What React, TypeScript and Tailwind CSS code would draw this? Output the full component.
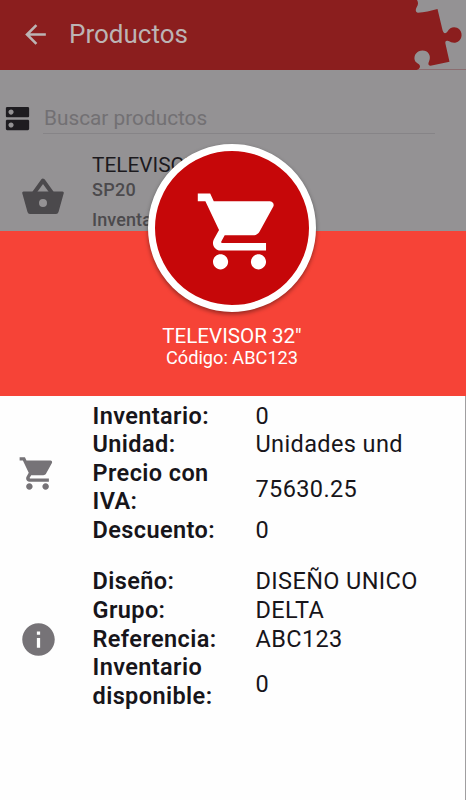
import React from "react";
import { MdArrowBack, MdDns, MdInfo, MdShoppingCart } from "react-icons/md";

function Row({ name, value, h, drop = "" }: { name: string; value: string; h: string; drop?: string }) {
  return (
    <div className={`flex items-center ${h}`}>
      <div className="w-[163px] pr-[30px] font-semibold tracking-[0.4px]">{name}</div>
      <div className={`whitespace-nowrap tracking-[0.38px] ${drop}`}>{value}</div>
    </div>
  );
}

function Puzzle() {
  return (
    <svg className="h-[70px] w-[60px] shrink-0" viewBox="0 0 60 70">
      <path
        d="M0 0H11C12.500 2 12.300 5 10.800 7C9.200 9.500 9.500 12.600 12 12.700C18 12.200 25 11 31.500 9L36.500 30C37.300 33.500 39.500 34.200 41.500 31.500C44 26.500 50 26 53.500 29.500C57.500 34 55.500 41 50 42.500C47 43.200 44.500 42 42.500 41C40 40 39 41.200 39.400 43.500L43.500 61.800L24.500 65.700C22 65.500 22 63.500 23.200 61C25.500 55.500 22 50.500 16.500 50.500C11 50.500 7.500 55 8.700 60C9.600 63.500 14.200 63.500 14 66.500C13.800 68.500 12.500 69.300 10.500 70H0Z"
        fill="#8b1e1e"
      />
    </svg>
  );
}

export default function App() {
  return (
    <div className="relative h-[800px] w-[466px] overflow-hidden bg-[#949294] font-['Roboto',sans-serif]">
      <header className="flex h-[70px] border-b border-[#8b6d70]">
        <div className="flex h-[70px] w-[406px] shrink-0 items-center bg-[#8b1e1e] pl-[20px] text-[#bcb4b4]">
          <MdArrowBack size={31} className="-mt-px" />
          <h1 className="-mt-[2px] ml-[18px] text-[26px] leading-[30px]">Productos</h1>
        </div>
        <Puzzle />
      </header>
      <div className="flex h-[64px] pl-[2px]">
        <MdDns size={31} className="mt-[33px] text-[#1e1c20]" />
        <div className="ml-[10px] flex w-[392px] items-center border-b border-[#868487] pl-[1px] pt-[32px] text-[20.8px] leading-6 text-[#727073]">
          Buscar productos
        </div>
      </div>
      <div className="flex pt-[18px] pl-[22px]">
        <svg className="mt-[26px] h-[37px] w-[42px] text-[#4b494c]" viewBox="0 0 42 37">
          <path d="M12 15L21 2.500L30 15" fill="none" stroke="currentColor" strokeWidth="4" strokeLinejoin="round" />
          <path fillRule="evenodd" fill="currentColor" d="M1.500 13.500H40.500Q42 13.500 41.800 15L36.500 34Q36 36 34 36H8Q6 36 5.500 34L.2 15Q0 13.500 1.500 13.500ZM21 21A4 4 0 1 0 21 29A4 4 0 1 0 21 21Z" />
        </svg>
        <div className="ml-[28px] whitespace-nowrap">
          <p className="text-[20.8px] leading-[26px] text-[#1c1a1e]">TELEVISOR 32"</p>
          <p className="text-[18px] font-medium leading-[24px] tracking-[0.3px] text-[#4c4a4d]">SP20</p>
          <p className="mt-[6px] text-[18px] font-medium leading-[24px] tracking-[0.1px] text-[#4c4a4d]">Inventario: 0</p>
        </div>
      </div>

      <section className="absolute inset-x-0 top-[231px] bottom-0 border-r border-[#a09ea0] bg-[#fefefe] text-[#17151a]">
        <div className="-mr-px h-[165px] bg-[#f64337] pt-[93px] pr-[2px] text-center text-white">
          <p className="text-[20.6px] leading-6">TELEVISOR 32"</p>
          <p className="text-[18.2px] leading-5">Código: ABC123</p>
        </div>
        <div className="flex pl-[18px] pt-[5.5px] text-[23.5px] leading-[28.6px]">
          <MdShoppingCart size={39} className="mt-[52px] shrink-0 text-[#767377]" />
          <div className="ml-[35.500px]">
            <Row name="Inventario:" value="0" h="h-[28.6px]" />
            <Row name="Unidad:" value="Unidades und" h="h-[28.6px]" />
            <Row name="Precio con IVA:" value="75630.25" h="h-[57.2px]" drop="pt-[5px]" />
            <Row name="Descuento:" value="0" h="h-[28.6px]" />
          </div>
        </div>
        <div className="flex pl-[18.500px] pt-[23px] text-[23.5px] leading-[28.6px]">
          <MdInfo size={39} className="mt-[52.500px] shrink-0 text-[#767377]" />
          <div className="ml-[35px]">
            <Row name="Diseño:" value="DISEÑO UNICO" h="h-[28.6px]" />
            <Row name="Grupo:" value="DELTA" h="h-[28.6px]" />
            <Row name="Referencia:" value="ABC123" h="h-[28.6px]" />
            <Row name="Inventario disponible:" value="0" h="h-[57.2px]" drop="pt-[5px]" />
          </div>
        </div>
      </section>

      <div className="absolute top-[144px] left-[148px] flex size-[168px] items-center justify-center rounded-full border-[7px] border-white bg-[#c60709] pt-[6px] pl-[14px] text-white shadow-[0_2px_4px_rgba(0,0,0,0.4)]">
        <MdShoppingCart size={91} className="shrink-0" />
      </div>
    </div>
  );
}
